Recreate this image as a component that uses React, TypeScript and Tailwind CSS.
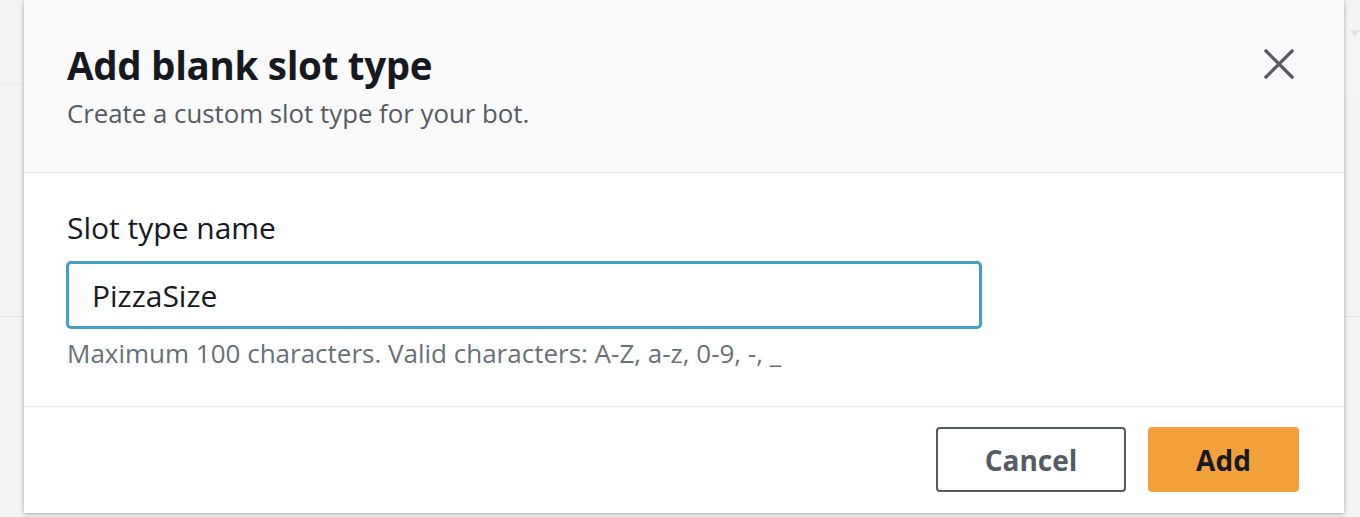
import { useState } from 'react'

const FONT = { fontFamily: '"Open Sans", "Noto Sans", Arial, sans-serif' }

function CloseIcon() {
  return (
    <svg width="30" height="30" viewBox="0 0 30 30" fill="none" aria-hidden="true">
      <path d="M2 2 L28 28 M28 2 L2 28" stroke="#545b64" strokeWidth="3.2" strokeLinecap="square" />
    </svg>
  )
}

export default function App() {
  const [name, setName] = useState('PizzaSize')

  return (
    <div className="flex h-[517px] w-[1360px] overflow-hidden bg-[#f2f3f3]" style={FONT}>
      {/* page behind the modal, left gutter */}
      <div className="flex w-[24px] shrink-0 flex-col">
        <div className="h-[85px] border-b border-[#e9ebeb]" />
        <div className="h-[232px] border-b border-[#e4e6e6]" />
      </div>

      <div className="relative z-10 flex h-[513px] w-[1320px] shrink-0 flex-col bg-white shadow-[0_1px_4px_rgba(0,28,36,0.35)]">
        <div className="flex h-[173px] shrink-0 items-start justify-between border-b border-[#eaeded] bg-[#fafafa] pl-[43px] pr-[50px]">
          <div className="pt-[43px]">
            <h2 className="text-[38.5px] font-bold leading-[44px] tracking-[-0.3px] text-[#16191f]">Add blank slot type</h2>
            <p className="mt-[10px] text-[25.8px] leading-[32px] text-[#545b64]">Create a custom slot type for your bot.</p>
          </div>
          <button className="mt-[49px]" aria-label="Close">
            <CloseIcon />
          </button>
        </div>

        <div className="h-[234px] shrink-0 border-b border-[#eaeded] pl-[43px] pt-[37px]">
          <label className="block text-[30px] leading-[36px] text-[#16191f]">Slot type name</label>
          <input
            value={name}
            onChange={e => setName(e.target.value)}
            className="-ml-[1px] mt-[15px] h-[68px] w-[916px] rounded-[5px] border-[3px] border-[#44a0c8] bg-white pl-[23px] text-[30px] text-[#16191f] outline-none"
            style={FONT}
          />
          <p className="mt-[8px] text-[26px] leading-[32px] text-[#687078]">
            Maximum 100 characters. Valid characters: A-Z, a-z, 0-9, -, _
          </p>
        </div>

        <div className="flex flex-1 items-start justify-end gap-[22px] pr-[45px] pt-[20px]">
          <button className="h-[65px] w-[190px] rounded-[4px] border-2 border-[#545b64] bg-white text-[28px] font-bold text-[#545b64]">
            Cancel
          </button>
          <button className="h-[65px] w-[151px] rounded-[4px] bg-[#f2a03a] text-[28px] font-bold text-[#16191f]">
            Add
          </button>
        </div>
      </div>

      {/* page behind the modal, right gutter */}
      <div className="flex w-[16px] shrink-0 flex-col">
        <div className="h-[23px]" />
        <div className="flex h-[72px] items-start bg-[#f4f5f5] pl-[6px] pt-[7px]">
          <svg width="10" height="8" viewBox="0 0 10 8" aria-hidden="true">
            <path d="M0 0 H10 L5 7 Z" fill="#dfe2e2" />
          </svg>
        </div>
        <div className="h-[222px] border-b border-[#e4e6e6]" />
      </div>
    </div>
  )
}
